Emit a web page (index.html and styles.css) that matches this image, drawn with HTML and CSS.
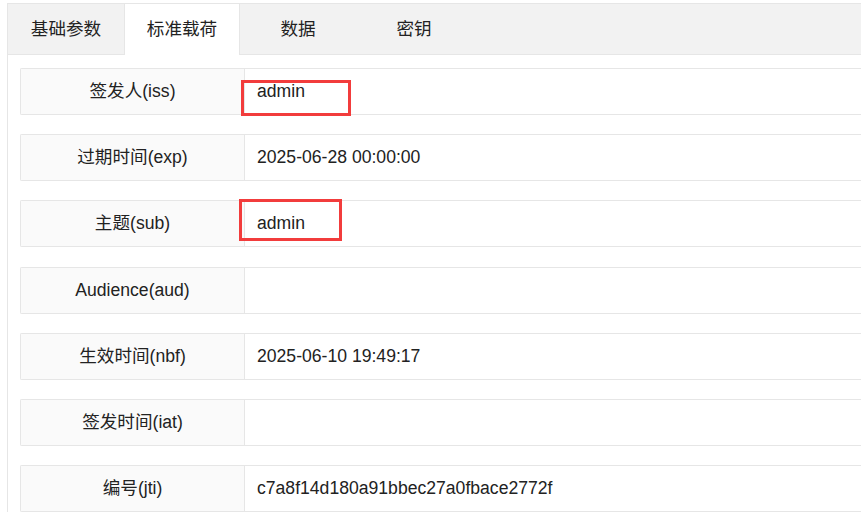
FILE: index.html
```html
<!DOCTYPE html>
<html lang="zh-CN">
<head>
    <meta charset="UTF-8">
    <meta name="viewport" content="width=device-width, initial-scale=1.0">
    <title>标准载荷</title>
    <link rel="stylesheet" href="styles.css">
</head>
<body>

<div class="tab-box">
    <ul class="tab-title">
        <li>基础参数</li>
        <li class="active">标准载荷</li>
        <li>数据</li>
        <li>密钥</li>
    </ul>

    <div class="tab-content">
        <div class="row">
            <div class="label">签发人(iss)</div>
            <div class="value">admin</div>
            <span class="mark mark-iss"></span>
        </div>
        <div class="row">
            <div class="label">过期时间(exp)</div>
            <div class="value">2025-06-28 00:00:00</div>
        </div>
        <div class="row">
            <div class="label">主题(sub)</div>
            <div class="value">admin</div>
            <span class="mark mark-sub"></span>
        </div>
        <div class="row">
            <div class="label">Audience(aud)</div>
            <div class="value"></div>
        </div>
        <div class="row">
            <div class="label">生效时间(nbf)</div>
            <div class="value">2025-06-10 19:49:17</div>
        </div>
        <div class="row">
            <div class="label">签发时间(iat)</div>
            <div class="value"></div>
        </div>
        <div class="row">
            <div class="label">编号(jti)</div>
            <div class="value">c7a8f14d180a91bbec27a0fbace2772f</div>
        </div>
    </div>
</div>

</body>
</html>
```

FILE: styles.css
```css
html, body {
    overflow: hidden;
}

body {
    margin: 0;
    background-color: #fff;
    font-family: "Liberation Sans", Arial, "Noto Sans CJK SC", sans-serif;
    font-size: 17.6px;
    color: #222;
}

.tab-box {
    margin: 3px 0 0 7px;
    border-top: 1px solid #e6e6e6;
    border-left: 1px solid #e6e6e6;
}

.tab-title {
    display: flex;
    margin: 0;
    padding: 0;
    list-style: none;
    height: 50px;
    background-color: #f2f2f2;
    border-bottom: 1px solid #e6e6e6;
}

.tab-title li {
    width: 116px;
    height: 50px;
    line-height: 50px;
    text-align: center;
    box-sizing: border-box;
}

.tab-title li.active {
    height: 51px;
    background-color: #fff;
    border-left: 1px solid #e6e6e6;
    border-right: 1px solid #e6e6e6;
}

.tab-content {
    padding: 13px 0 0 12px;
}

/* rows are cut off by the right edge, so no right border */
.row {
    position: relative;
    display: flex;
    height: 47px;
    margin-bottom: 19.2px;
    border: 1px solid #e6e6e6;
    border-right: none;
    border-radius: 2px 0 0 2px;
    box-sizing: border-box;
}

.label {
    width: 223px;
    flex-shrink: 0;
    background-color: #fafafa;
    border-right: 1px solid #e6e6e6;
    text-align: center;
    line-height: 45px;
}

.value {
    flex: 1;
    padding-left: 12px;
    line-height: 45px;
}

.mark {
    position: absolute;
    border: 3px solid #f23c3c;
    box-sizing: border-box;
}

.mark-iss {
    left: 220px;
    top: 11px;
    width: 110px;
    height: 36px;
}

.mark-sub {
    left: 218px;
    top: -2px;
    width: 103px;
    height: 42px;
}
```
